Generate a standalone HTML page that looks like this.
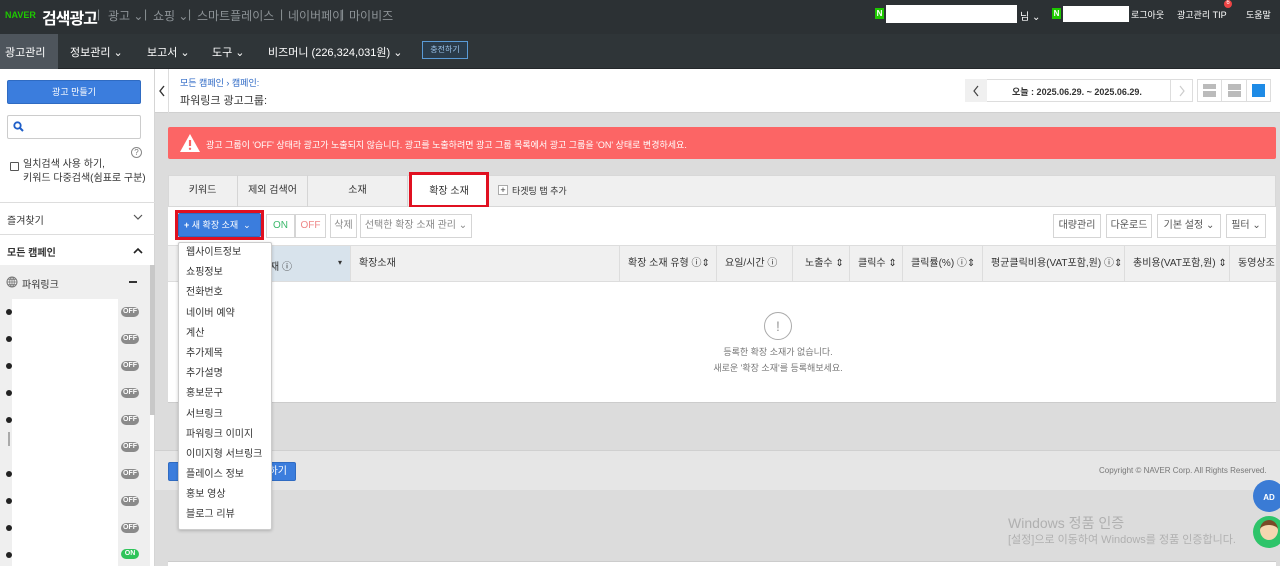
<!DOCTYPE html>
<html><head><meta charset="utf-8"><style>
*{box-sizing:border-box;margin:0;padding:0}
html,body{width:1280px;height:566px;overflow:hidden}
body{position:relative;font-family:"Liberation Sans","Noto Sans CJK KR",sans-serif;font-size:11px;color:#333;background:#dcdcdc}
.a{position:absolute;white-space:nowrap}
.top{left:0;top:0;width:1280px;height:34px;background:#2c3134}
.nav{left:0;top:34px;width:1280px;height:35px;background:#2f3538;border-bottom:1px solid #23272a}
.w{color:#fff}
.side{left:0;top:69px;width:155px;height:497px;background:#fff;border-right:1px solid #d5d5d5}
.btn{background:#3b7ddd;color:#fff;text-align:center;border:1px solid #2f6bc2;border-radius:2px}
.pill{width:18px;height:10px;border-radius:5px;background:#8a8a8a;color:#fff;font-size:7px;text-align:center;line-height:10px;font-weight:bold}
.dot{left:6px;width:6px;height:6px;border-radius:50%;background:#222}
.tab{top:175px;height:32px;line-height:32px;text-align:center;border-right:1px solid #d5d5d5;font-size:10px;color:#333}
.tb{top:214px;height:24px;line-height:22px;border:1px solid #d5d5d5;background:#fff;font-size:10px;text-align:center;color:#555}
.th{top:245px;height:37px;line-height:37px;border-right:1px solid #ddd;font-size:10px;color:#333;padding-left:8px;overflow:hidden}
.dd{left:178px;top:242px;width:94px;height:288px;background:#fff;border:1px solid #ccc;border-radius:2px;box-shadow:0 1px 3px rgba(0,0,0,.2)}
.dd div{height:20.2px;line-height:20px;padding-left:7px;font-size:10px;color:#333}
.m{font-size:12px;color:#8c9296;top:7px}
</style></head><body>
<div class="a top"></div>
<div class="a" style="left:5px;top:10px;color:#1ec800;font-weight:bold;font-size:9px">NAVER</div>
<div class="a w" style="left:42px;top:5px;font-size:16px;font-weight:bold;letter-spacing:-1px">검색광고</div>
<div class="a m" style="left:97px">|</div>
<div class="a m" style="left:108px">광고 ⌄</div>
<div class="a m" style="left:144px">|</div>
<div class="a m" style="left:153px">쇼핑 ⌄</div>
<div class="a m" style="left:156px;display:none"></div>
<div class="a m" style="left:156px;left:157px;display:none"></div>
<div class="a m" style="left:155px;display:none"></div>
<div class="a m" style="left:157px;display:none"></div>
<div class="a m" style="left:154px;display:none"></div>
<div class="a m" style="left:156px;display:none"></div>
<div class="a m" style="left:158px;display:none"></div>
<div class="a m" style="left:155px;display:none"></div>
<div class="a m" style="left:156px;display:none"></div>
<div class="a m" style="left:157px;display:none"></div>
<div class="a m" style="left:154px;display:none"></div>
<div class="a m" style="left:155px;display:none"></div>
<div class="a m" style="left:156px;display:none"></div>
<div class="a m" style="left:158px;display:none"></div>
<div class="a m" style="left:188px">|</div>
<div class="a m" style="left:197px">스마트플레이스</div>
<div class="a m" style="left:280px">|</div>
<div class="a m" style="left:288px">네이버페이</div>
<div class="a m" style="left:341px">|</div>
<div class="a m" style="left:349px">마이비즈</div>
<div class="a" style="left:875px;top:8px;width:9px;height:11px;background:#1ec800;color:#fff;font-size:8px;font-weight:bold;text-align:center;line-height:11px">N</div>
<div class="a" style="left:886px;top:5px;width:131px;height:18px;background:#fff"></div>
<div class="a w" style="left:1020px;top:8px;font-size:10px">님 ⌄</div>
<div class="a" style="left:1052px;top:8px;width:9px;height:11px;background:#1ec800;color:#fff;font-size:8px;font-weight:bold;text-align:center;line-height:11px">N</div>
<div class="a" style="left:1063px;top:6px;width:66px;height:16px;background:#fff"></div>
<div class="a w" style="left:1131px;top:8px;font-size:9px">로그아웃</div>
<div class="a w" style="left:1177px;top:8px;font-size:9px">광고관리 TIP</div>
<div class="a" style="left:1224px;top:0px;width:8px;height:8px;border-radius:4px;background:#e44;color:#fff;font-size:6px;text-align:center">6</div>
<div class="a w" style="left:1246px;top:8px;font-size:9px">도움말</div>
<div class="a nav"></div>
<div class="a" style="left:0;top:34px;width:58px;height:35px;background:#4e555c"></div>
<div class="a w" style="left:5px;top:44px;font-size:11px">광고관리</div>
<div class="a w" style="left:70px;top:44px;font-size:11px">정보관리 ⌄</div>
<div class="a w" style="left:147px;top:44px;font-size:11px">보고서 ⌄</div>
<div class="a w" style="left:212px;top:44px;font-size:11px">도구 ⌄</div>
<div class="a w" style="left:268px;top:44px;font-size:11px">비즈머니 (226,324,031원) ⌄</div>
<div class="a" style="left:422px;top:41px;width:46px;height:18px;border:1px solid #5a9ad6;background:#2a3b4a;color:#9cc3ea;font-size:8px;text-align:center;line-height:16px">충전하기</div>

<div class="a side"></div>
<div class="a btn" style="left:7px;top:80px;width:134px;height:24px;line-height:22px;font-size:9px">광고 만들기</div>
<div class="a" style="left:7px;top:115px;width:134px;height:24px;border:1px solid #ccc;border-radius:2px"></div>
<svg class="a" style="left:13px;top:121px" width="11" height="11" viewBox="0 0 11 11"><circle cx="4.5" cy="4.5" r="3.2" fill="none" stroke="#1e5ec8" stroke-width="1.8"/><path d="M7 7l3 3" stroke="#1e5ec8" stroke-width="2"/></svg>
<div class="a" style="left:131px;top:147px;width:11px;height:11px;border:1px solid #888;border-radius:50%;font-size:8px;text-align:center;line-height:9px;color:#777">?</div>
<div class="a" style="left:10px;top:162px;width:9px;height:9px;border:1px solid #555;border-radius:1px"></div>
<div class="a" style="left:23px;top:158px;font-size:10px;line-height:14px">일치검색 사용 하기,<br>키워드 다중검색(쉼표로 구분)</div>
<div class="a" style="left:0;top:202px;width:155px;height:1px;background:#ddd"></div>
<div class="a" style="left:7px;top:212px;font-size:10px">즐겨찾기</div>
<svg class="a" style="left:133px;top:214px" width="10" height="7"><path d="M1 1l4 4 4-4" fill="none" stroke="#555" stroke-width="1.2"/></svg>
<div class="a" style="left:0;top:234px;width:155px;height:1px;background:#ddd"></div>
<div class="a" style="left:7px;top:244px;font-size:10px;font-weight:bold">모든 캠페인</div>
<svg class="a" style="left:133px;top:247px" width="10" height="7"><path d="M1 6l4-4 4 4" fill="none" stroke="#222" stroke-width="1.6"/></svg>
<div class="a" style="left:0;top:265px;width:150px;height:301px;background:#efefef"></div>
<div class="a" style="left:150px;top:265px;width:5px;height:150px;background:#c8c8c8"></div>
<svg class="a" style="left:6px;top:276px" width="12" height="12" viewBox="0 0 12 12"><circle cx="6" cy="6" r="5" fill="none" stroke="#777"/><path d="M1 6h10M6 1v10M2.5 3.5h7M2.5 8.5h7" stroke="#777" stroke-width=".8"/><ellipse cx="6" cy="6" rx="2.3" ry="5" fill="none" stroke="#777" stroke-width=".8"/></svg>
<div class="a" style="left:22px;top:276px;font-size:10px">파워링크</div>
<div class="a" style="left:129px;top:281px;width:8px;height:2px;background:#333"></div>
<div class="a" style="left:12px;top:299px;width:106px;height:267px;background:#fff"></div>
<div class="a dot" style="top:309px"></div><div class="a dot" style="top:336px"></div><div class="a dot" style="top:363px"></div><div class="a dot" style="top:390px"></div><div class="a dot" style="top:417px"></div>
<div class="a" style="left:8px;top:432px;width:2px;height:14px;background:#aaa"></div>
<div class="a dot" style="top:471px"></div><div class="a dot" style="top:498px"></div><div class="a dot" style="top:525px"></div><div class="a dot" style="top:552px"></div>
<div class="a pill" style="left:121px;top:307px">OFF</div>
<div class="a pill" style="left:121px;top:334px">OFF</div>
<div class="a pill" style="left:121px;top:361px">OFF</div>
<div class="a pill" style="left:121px;top:388px">OFF</div>
<div class="a pill" style="left:121px;top:415px">OFF</div>
<div class="a pill" style="left:121px;top:442px">OFF</div>
<div class="a pill" style="left:121px;top:469px">OFF</div>
<div class="a pill" style="left:121px;top:496px">OFF</div>
<div class="a pill" style="left:121px;top:523px">OFF</div>
<div class="a pill" style="left:121px;top:549px;background:#2fc45a">ON</div>

<div class="a" style="left:155px;top:69px;width:1125px;height:44px;background:#fff;border-bottom:1px solid #d0d0d0"></div>
<div class="a" style="left:155px;top:69px;width:14px;height:44px;border-right:1px solid #ddd"></div>
<svg class="a" style="left:158px;top:85px" width="8" height="12"><path d="M6 1L2 6l4 5" fill="none" stroke="#333" stroke-width="1.4"/></svg>
<div class="a" style="left:180px;top:76px;font-size:9px;color:#2a66c4">모든 캠페인 › 캠페인:</div>
<div class="a" style="left:180px;top:92px;font-size:11px">파워링크 광고그룹:</div>
<div class="a" style="left:965px;top:79px;width:228px;height:23px;border:1px solid #ddd;background:#fff"></div>
<div class="a" style="left:965px;top:79px;width:22px;height:23px;background:#f0f0f0"></div>
<svg class="a" style="left:972px;top:85px" width="8" height="12"><path d="M6 1L2 6l4 5" fill="none" stroke="#444" stroke-width="1.2"/></svg>
<div class="a" style="left:1170px;top:79px;width:22px;height:23px;border-left:1px solid #ddd"></div>
<svg class="a" style="left:1178px;top:85px" width="8" height="12"><path d="M2 1l4 5-4 5" fill="none" stroke="#ccc" stroke-width="1.2"/></svg>
<div class="a" style="left:1012px;top:85px;font-size:9px;font-weight:bold">오늘 : 2025.06.29. ~ 2025.06.29.</div>
<div class="a" style="left:1197px;top:79px;width:74px;height:23px;border:1px solid #ddd;background:#fff"></div>
<div class="a" style="left:1221px;top:79px;width:1px;height:23px;background:#ddd"></div>
<div class="a" style="left:1246px;top:79px;width:1px;height:23px;background:#ddd"></div>
<div class="a" style="left:1203px;top:84px;width:13px;height:5px;background:#bbb"></div>
<div class="a" style="left:1203px;top:91px;width:13px;height:6px;background:#bbb"></div>
<div class="a" style="left:1228px;top:84px;width:13px;height:6px;background:#bbb"></div>
<div class="a" style="left:1228px;top:91px;width:13px;height:6px;background:#bbb"></div>
<div class="a" style="left:1252px;top:84px;width:13px;height:13px;background:#1e8be6"></div>

<div class="a" style="left:168px;top:127px;width:1108px;height:32px;background:#fc6565;border-radius:2px"></div>
<svg class="a" style="left:180px;top:134px" width="20" height="18" viewBox="0 0 20 18"><path d="M10 0L20 18H0z" fill="#fff"/><path d="M10 6v6" stroke="#fc6565" stroke-width="2.2"/><circle cx="10" cy="14.8" r="1.2" fill="#fc6565"/></svg>
<div class="a" style="left:206px;top:138px;font-size:9px;color:#fff">광고 그룹이 'OFF' 상태라 광고가 노출되지 않습니다. 광고를 노출하려면 광고 그룹 목록에서 광고 그룹을 'ON' 상태로 변경하세요.</div>

<div class="a" style="left:168px;top:175px;width:1108px;height:32px;background:#f0f0f0;border:1px solid #d8d8d8"></div>
<div class="a tab" style="left:168px;width:70px">키워드</div>
<div class="a tab" style="left:238px;width:70px">제외 검색어</div>
<div class="a tab" style="left:308px;width:100px">소재</div>
<div class="a tab" style="left:409px;top:172px;width:80px;height:36px;line-height:34px;background:#fff;border:3px solid #e01020">확장 소재</div>
<div class="a" style="left:498px;top:185px;width:10px;height:10px;border:1px solid #aaa;background:#fff;font-size:9px;line-height:8px;text-align:center">+</div>
<div class="a" style="left:512px;top:184px;font-size:9px">타겟팅 탭 추가</div>

<div class="a" style="left:168px;top:207px;width:1108px;height:38px;background:#fff"></div>
<div class="a" style="left:175px;top:210px;width:89px;height:30px;border:3px solid #e01020"></div>
<div class="a btn" style="left:178px;top:213px;width:83px;height:24px;line-height:22px;font-size:9px;text-align:left;padding-left:5px"><b>+</b> 새 확장 소재 &nbsp;⌄</div>
<div class="a tb" style="left:266px;width:29px;color:#3bb86b">ON</div>
<div class="a tb" style="left:295px;width:31px;color:#e88">OFF</div>
<div class="a tb" style="left:330px;width:27px;color:#888">삭제</div>
<div class="a tb" style="left:360px;width:112px;color:#888">선택한 확장 소재 관리 ⌄</div>
<div class="a tb" style="left:1053px;width:48px">대량관리</div>
<div class="a tb" style="left:1106px;width:46px">다운로드</div>
<div class="a tb" style="left:1157px;width:64px">기본 설정 ⌄</div>
<div class="a tb" style="left:1226px;width:40px">필터 ⌄</div>

<div class="a" style="left:168px;top:245px;width:1108px;height:37px;background:#f0f0f0;border-top:1px solid #ddd;border-bottom:1px solid #ddd"></div>
<div class="a" style="left:190px;top:246px;width:160px;height:35px;background:#d8e3ec"></div>
<div class="a" style="left:270px;top:258px;font-size:10px">재 ⓘ</div>
<div class="a" style="left:338px;top:258px;font-size:8px">▾</div>
<div class="a th" style="left:350px;width:270px;border-left:1px solid #ddd">확장소재</div>
<div class="a th" style="left:620px;width:97px">확장 소재 유형 ⓘ⇕</div>
<div class="a th" style="left:717px;width:76px">요일/시간 ⓘ</div>
<div class="a th" style="left:793px;width:57px;padding-left:12px">노출수 ⇕</div>
<div class="a th" style="left:850px;width:53px">클릭수 ⇕</div>
<div class="a th" style="left:903px;width:80px">클릭률(%) ⓘ⇕</div>
<div class="a th" style="left:983px;width:142px">평균클릭비용(VAT포함,원) ⓘ⇕</div>
<div class="a th" style="left:1125px;width:105px">총비용(VAT포함,원) ⇕</div>
<div class="a th" style="left:1230px;width:46px;border-right:0">동영상조</div>
<div class="a" style="left:168px;top:282px;width:1108px;height:121px;background:#fff;border-bottom:1px solid #ccc"></div>
<div class="a" style="left:764px;top:312px;width:28px;height:28px;border:1px solid #aaa;border-radius:50%;text-align:center;line-height:26px;color:#999;font-size:14px">!</div>
<div class="a" style="left:678px;top:344px;font-size:9px;color:#777;text-align:center;width:200px;line-height:16px">등록한 확장 소재가 없습니다.<br>새로운 '확장 소재'를 등록해보세요.</div>

<div class="a" style="left:155px;top:450px;width:1125px;height:40px;background:#e6e6e6;border-top:1px solid #d0d0d0"></div>
<div class="a btn" style="left:168px;top:462px;width:128px;height:19px;line-height:17px;font-size:10px;text-align:right;padding-right:8px">하기</div>
<div class="a" style="left:1099px;top:466px;font-size:8px;color:#777">Copyright © NAVER Corp. All Rights Reserved.</div>
<div class="a" style="left:168px;top:561px;width:1108px;height:5px;background:#fff;border-top:1px solid #ccc"></div>
<div class="a" style="left:1008px;top:513px;font-size:14px;color:#b0b0b0">Windows 정품 인증</div>
<div class="a" style="left:1008px;top:531px;font-size:11px;color:#b0b0b0">[설정]으로 이동하여 Windows를 정품 인증합니다.</div>
<div class="a" style="left:1253px;top:480px;width:32px;height:32px;border-radius:50%;background:#3a7bd5;color:#fff;font-size:8px;font-weight:bold;text-align:center;line-height:36px">AD</div>
<div class="a" style="left:1253px;top:516px;width:32px;height:32px;border-radius:50%;background:#2ec46a"></div>
<div class="a" style="left:1260px;top:520px;width:18px;height:20px;border-radius:50%;background:#f5d6b0;border-top:5px solid #7a4a28"></div>

<div class="a dd">
<div>웹사이트정보</div><div>쇼핑정보</div><div>전화번호</div><div>네이버 예약</div><div>계산</div><div>추가제목</div><div>추가설명</div><div>홍보문구</div><div>서브링크</div><div>파워링크 이미지</div><div>이미지형 서브링크</div><div>플레이스 정보</div><div>홍보 영상</div><div>블로그 리뷰</div>
</div>
</body></html>
